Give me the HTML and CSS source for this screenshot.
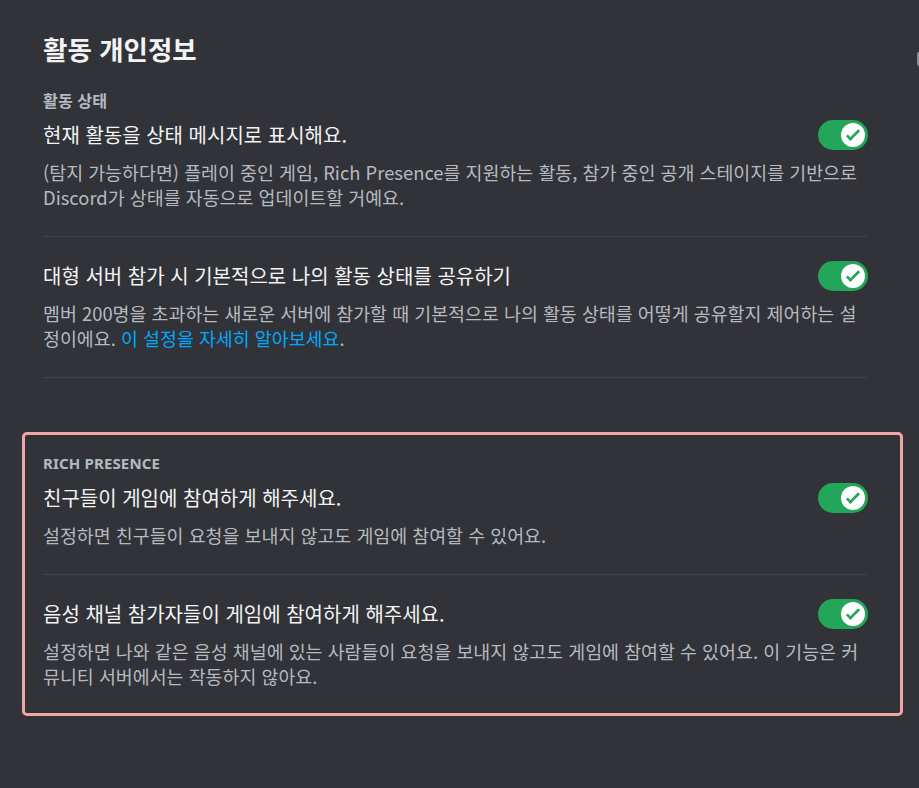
FILE: index.html
```html
<!DOCTYPE html>
<html lang="ko">
<head>
<meta charset="utf-8">
<title>활동 개인정보</title>
<link rel="stylesheet" href="styles.css">
</head>
<body>
<div class="scroller">
  <main class="page">
    <h2 class="page-title">활동 개인정보</h2>

    <section class="section">
      <h3 class="section-header">활동 상태</h3>
      <div class="row">
        <div class="row-head">
          <div class="row-title">현재 활동을 상태 메시지로 표시해요.</div>
          <div class="toggle"><svg class="knob" viewBox="0 0 20 20"><circle cx="10" cy="10" r="10" fill="#fff"/><path fill="#23a55a" d="M7.89561 14.8538L6.30462 13.2629L14.3099 5.25755L15.9009 6.84854L7.89561 14.8538Z"/><path fill="#23a55a" d="M4.08643 11.0903L5.67742 9.49929L9.4485 13.2704L7.85751 14.8614L4.08643 11.0903Z"/></svg></div>
        </div>
        <div class="row-desc">(탐지 가능하다면) 플레이 중인 게임, Rich Presence를 지원하는 활동, 참가 중인 공개 스테이지를 기반으로 Discord가 상태를 자동으로 업데이트할 거예요.</div>
      </div>
      <div class="row">
        <div class="row-head">
          <div class="row-title">대형 서버 참가 시 기본적으로 나의 활동 상태를 공유하기</div>
          <div class="toggle"><svg class="knob" viewBox="0 0 20 20"><circle cx="10" cy="10" r="10" fill="#fff"/><path fill="#23a55a" d="M7.89561 14.8538L6.30462 13.2629L14.3099 5.25755L15.9009 6.84854L7.89561 14.8538Z"/><path fill="#23a55a" d="M4.08643 11.0903L5.67742 9.49929L9.4485 13.2704L7.85751 14.8614L4.08643 11.0903Z"/></svg></div>
        </div>
        <div class="row-desc">멤버 200명을 초과하는 새로운 서버에 참가할 때 기본적으로 나의 활동 상태를 어떻게 공유할지 제어하는 설정이에요. <a class="link" href="#">이 설정을 자세히 알아보세요</a>.</div>
      </div>
    </section>

    <section class="section section--highlight">
      <h3 class="section-header section-header--latin">Rich Presence</h3>
      <div class="row">
        <div class="row-head">
          <div class="row-title">친구들이 게임에 참여하게 해주세요.</div>
          <div class="toggle"><svg class="knob" viewBox="0 0 20 20"><circle cx="10" cy="10" r="10" fill="#fff"/><path fill="#23a55a" d="M7.89561 14.8538L6.30462 13.2629L14.3099 5.25755L15.9009 6.84854L7.89561 14.8538Z"/><path fill="#23a55a" d="M4.08643 11.0903L5.67742 9.49929L9.4485 13.2704L7.85751 14.8614L4.08643 11.0903Z"/></svg></div>
        </div>
        <div class="row-desc">설정하면 친구들이 요청을 보내지 않고도 게임에 참여할 수 있어요.</div>
      </div>
      <div class="row row--last">
        <div class="row-head">
          <div class="row-title">음성 채널 참가자들이 게임에 참여하게 해주세요.</div>
          <div class="toggle"><svg class="knob" viewBox="0 0 20 20"><circle cx="10" cy="10" r="10" fill="#fff"/><path fill="#23a55a" d="M7.89561 14.8538L6.30462 13.2629L14.3099 5.25755L15.9009 6.84854L7.89561 14.8538Z"/><path fill="#23a55a" d="M4.08643 11.0903L5.67742 9.49929L9.4485 13.2704L7.85751 14.8614L4.08643 11.0903Z"/></svg></div>
        </div>
        <div class="row-desc">설정하면 나와 같은 음성 채널에 있는 사람들이 요청을 보내지 않고도 게임에 참여할 수 있어요. 이 기능은 커뮤니티 서버에서는 작동하지 않아요.</div>
      </div>
    </section>
  </main>
  <div class="scroll-thumb"></div>
</div>
</body>
</html>
```

FILE: styles.css
```css
html, body {
  margin: 0;
  padding: 0;
  background: #313338;
}

body {
  font-family: "Noto Sans CJK KR", "Noto Sans", sans-serif;
  color: #f2f3f5;
  width: 919px;
  height: 788px;
  overflow: hidden;
}

.scroller {
  position: relative;
  height: 788px;
}

.page {
  padding: 34px 51px 0 43px;
}

.page-title {
  margin: 0 0 26px 0;
  font-size: 26.5px;
  line-height: 30px;
  font-weight: 700;
  color: #f2f3f5;
}

.section-header {
  margin: 0 0 10px 0;
  font-size: 16.2px;
  line-height: 20px;
  font-weight: 700;
  color: #b5bac1;
}

.section-header--latin {
  font-family: "Noto Sans", "Noto Sans CJK KR", sans-serif;
  font-size: 15px;
  text-transform: uppercase;
  letter-spacing: 0.01em;
}

.row {
  padding-bottom: 26px;
  margin-bottom: 24px;
  border-bottom: 1px solid #3f4147;
}

.row--last {
  padding-bottom: 0;
  margin-bottom: 0;
  border-bottom: none;
}

.row-head {
  display: flex;
  align-items: center;
  justify-content: space-between;
  gap: 16px;
}

.row-title {
  font-size: 20px;
  line-height: 30px;
  font-weight: 400;
  color: #f2f3f5;
}

.row-desc {
  margin-top: 10px;
  font-size: 18.4px;
  line-height: 25px;
  color: #b5bac1;
}

.link {
  color: #00a8fc;
  text-decoration: none;
}

.toggle {
  flex: 0 0 auto;
  width: 50px;
  height: 30px;
  box-sizing: border-box;
  padding: 3px;
  border-radius: 15px;
  background: #23a55a;
  display: flex;
  align-items: center;
  justify-content: flex-end;
}

.knob {
  width: 24px;
  height: 24px;
  display: block;
}

.section--highlight {
  margin: 54px -35px 0 -21px;
  padding: 18px 32px 24px 18px;
  border: 3px solid #f2a5a6;
  border-radius: 5px;
}

.scroll-thumb {
  position: absolute;
  right: 0;
  top: 52px;
  width: 2px;
  height: 14px;
  background: #8a8d93;
  border-radius: 2px 0 0 2px;
}
```
